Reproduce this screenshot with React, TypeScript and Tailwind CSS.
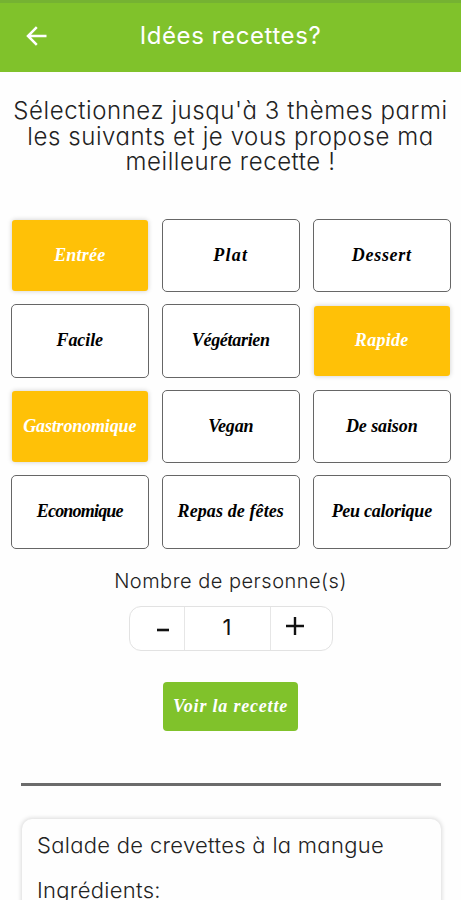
import { useState } from 'react';

type Theme = {
  label: string;
  spacing: string;
};

const THEMES: Theme[] = [
  { label: 'Entrée', spacing: 'tracking-[0.2px]' },
  { label: 'Plat', spacing: 'tracking-[1.3px]' },
  { label: 'Dessert', spacing: 'tracking-[0.7px]' },
  { label: 'Facile', spacing: 'tracking-[-0.1px]' },
  { label: 'Végétarien', spacing: 'tracking-[-0.3px]' },
  { label: 'Rapide', spacing: 'tracking-[0.3px]' },
  { label: 'Gastronomique', spacing: 'tracking-[-0.15px]' },
  { label: 'Vegan', spacing: 'tracking-[-0.2px]' },
  { label: 'De saison', spacing: 'tracking-[-0.1px]' },
  { label: 'Economique', spacing: 'tracking-[-0.8px]' },
  { label: 'Repas de fêtes', spacing: 'tracking-[0.1px]' },
  { label: 'Peu calorique', spacing: 'tracking-[-0.25px]' },
];

const MAX_THEMES = 3;

function ThemeButton({
  theme,
  active,
  onToggle,
}: {
  theme: Theme;
  active: boolean;
  onToggle: (label: string) => void;
}) {
  return (
    <button
      type="button"
      onClick={() => onToggle(theme.label)}
      className={`flex cursor-pointer items-center justify-center whitespace-nowrap font-['Liberation_Serif',serif] text-[18px] font-bold italic ${theme.spacing} ${
        active
          ? 'm-[1.5px] rounded-[3px] bg-[#ffc107] text-white shadow-[0_0_5px_rgba(0,0,0,0.2)]'
          : 'rounded-[5px] border border-[#666] bg-white text-black'
      }`}
    >
      {theme.label}
    </button>
  );
}

export default function App() {
  const [selected, setSelected] = useState<string[]>([
    'Entrée',
    'Rapide',
    'Gastronomique',
  ]);
  const [people, setPeople] = useState(1);

  function toggleTheme(label: string) {
    setSelected((prev) => {
      if (prev.includes(label)) return prev.filter((item) => item !== label);
      return prev.length < MAX_THEMES ? [...prev, label] : prev;
    });
  }

  return (
    <div className="flex h-[900px] w-[461px] flex-col overflow-hidden bg-[#fefefe] font-[Inter,sans-serif] font-light text-[#222] [font-feature-settings:'cv11']">
      <header className="grid h-[72px] shrink-0 grid-cols-[1fr_auto_1fr] items-center border-t-[3px] border-[#75b232] bg-[#80c22b] pb-[3px] text-white">
        <button type="button" aria-label="Retour" className="ml-[26px] w-fit cursor-pointer">
          <svg
            width="22"
            height="20"
            viewBox="0 0 22 20"
            fill="none"
            stroke="currentColor"
            strokeWidth="2.5"
          >
            <path d="M20.5 10H2M10.8 1.2L2 10l8.8 8.8" />
          </svg>
        </button>
        <h1 className="text-[24px] font-normal leading-[30px] tracking-[0.6px]">
          Idées recettes?
        </h1>
      </header>

      <main className="flex flex-1 flex-col">
        <p className="mt-[26px] whitespace-nowrap text-center text-[24px] leading-[25.5px] tracking-[0.58px]">
          Sélectionnez jusqu'à 3 thèmes parmi
          <br />
          les suivants et je vous propose ma
          <br />
          meilleure recette !
        </p>

        <section className="ml-[10.5px] mr-[10px] mt-[44px] grid shrink-0 auto-rows-[73.5px] grid-cols-3 gap-x-[12.5px] gap-y-[12px]">
          {THEMES.map((theme) => (
            <ThemeButton
              key={theme.label}
              theme={theme}
              active={selected.includes(theme.label)}
              onToggle={toggleTheme}
            />
          ))}
        </section>

        <p className="mt-[19px] text-center text-[20px] leading-[26px] tracking-[0.5px]">
          Nombre de personne(s)
        </p>

        <div className="mx-auto mt-[12px] grid h-[45px] w-[204px] shrink-0 grid-cols-[54px_87px_1fr] rounded-[12px] border border-[#e2e2e2] bg-white text-[#111]">
          <button
            type="button"
            aria-label="Moins"
            className="flex cursor-pointer items-center justify-center pl-[13px] pt-[3px]"
            onClick={() => setPeople((n) => Math.max(1, n - 1))}
          >
            <svg width="12" height="4" viewBox="0 0 12 4">
              <path d="M0 2h12" stroke="currentColor" strokeWidth="2.6" />
            </svg>
          </button>
          <span className="flex items-center justify-center border-x border-[#e6e6e6] pb-[2px] text-[22px] font-normal">
            {people}
          </span>
          <button
            type="button"
            aria-label="Plus"
            className="flex cursor-pointer items-center justify-center pb-[5px] pr-[13px]"
            onClick={() => setPeople((n) => n + 1)}
          >
            <svg width="18" height="18" viewBox="0 0 18 18">
              <path d="M0 9h18M9 0v18" stroke="currentColor" strokeWidth="2.4" />
            </svg>
          </button>
        </div>

        <button
          type="button"
          className="mx-auto mt-[31.5px] h-[49px] w-[135px] shrink-0 cursor-pointer whitespace-nowrap rounded-[4px] bg-[#80c22b] pb-px font-['Liberation_Serif',serif] text-[18px] font-bold italic tracking-[0.8px] text-white"
        >
          Voir la recette
        </button>

        <hr className="ml-[21px] mr-[20px] mt-[52px] border-t-[3px] border-[#6b6b6b]" />

        <article className="ml-[22px] mr-[20px] mt-[33px] h-[140px] shrink-0 rounded-t-[10px] bg-[#fefefe] px-[15px] pt-[10.5px] shadow-[0_0_4px_1px_rgba(0,0,0,0.14)]">
          <h2 className="whitespace-nowrap text-[22px] leading-[30px] tracking-[0.3px]">
            Salade de crevettes à la mangue
          </h2>
          <p className="mt-[15px] text-[22px] leading-[30px] tracking-[0.3px]">Ingrédients:</p>
        </article>
      </main>
    </div>
  );
}
